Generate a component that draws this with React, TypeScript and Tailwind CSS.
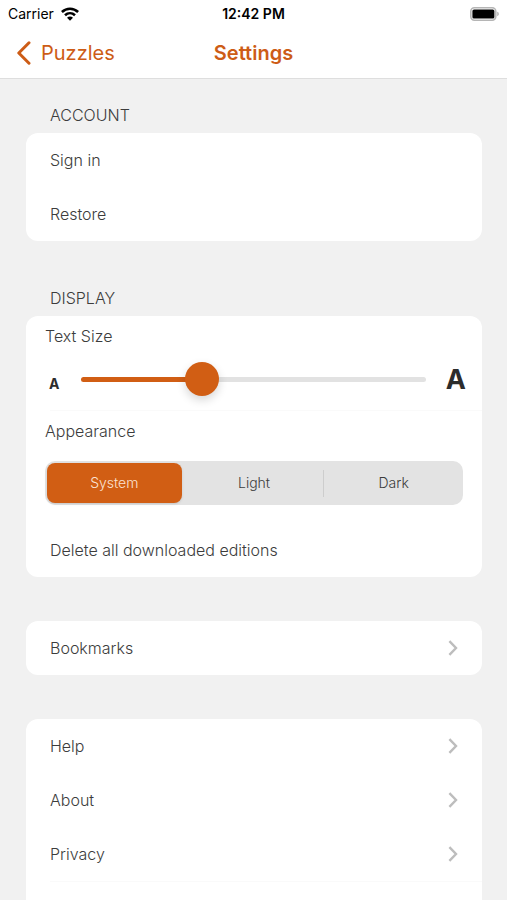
import React, { Fragment, useState } from "react";

const ACCOUNT_ITEMS = ["Sign in", "Restore"];
const INFO_ITEMS = ["Help", "About", "Privacy"];
const APPEARANCES = ["System", "Light", "Dark"];
const MAX_TEXT_SIZE = 6;

function StatusBar() {
  return (
    <div className="grid grid-cols-3 items-center h-[27px] px-2 text-black">
      <div className="flex items-center gap-[7px] text-[14px]">
        <span>Carrier</span>
        <svg width="18" height="14" viewBox="0 0 18 14" fill="none" stroke="currentColor" strokeWidth="2.6" aria-hidden="true">
          <path d="M.9 5C5.6.7 12.4.7 17.1 5" />
          <path d="M4 8.3c2.9-2.7 7.1-2.7 10 0" />
          <path d="M9 13.8 6 10.8c1.7-1.6 4.3-1.6 6 0Z" fill="currentColor" stroke="none" />
        </svg>
      </div>
      <div className="text-center text-[14px] font-semibold whitespace-nowrap">12:42 PM</div>
      <svg className="justify-self-end" width="30" height="14" viewBox="0 0 30 14" aria-hidden="true">
        <rect x="1.8" y="0.8" width="25" height="12.4" rx="3.6" fill="#fff" stroke="#b5b5b5" strokeWidth="1.6" />
        <rect x="3.4" y="2.5" width="22" height="9" rx="1.6" fill="#000" />
        <path d="M28.2 4.8c2.2.6 2.2 3.8 0 4.4Z" fill="#b5b5b5" />
      </svg>
    </div>
  );
}

function NavBar() {
  return (
    <div className="grid grid-cols-3 items-center h-[51px] px-4 text-[20px] text-[#cd5c16]">
      <a href="#puzzles" className="flex items-center gap-2">
        <svg width="17" height="24" viewBox="0 0 17 24" fill="none" stroke="currentColor" strokeWidth="3" strokeLinecap="round" strokeLinejoin="round" aria-hidden="true">
          <path d="M13 1.8 2.8 12 13 22.2" />
        </svg>
        Puzzles
      </a>
      <h1 className="text-center font-semibold">Settings</h1>
    </div>
  );
}

function Row({ label, chevron }: { label: string; chevron?: boolean }) {
  return (
    <button type="button" className="flex items-center justify-between w-full h-[54px] px-6 text-left">
      <span>{label}</span>
      {chevron && (
        <svg width="10" height="16" viewBox="0 0 10 16" fill="none" stroke="#bdbdbd" strokeWidth="2.4" aria-hidden="true">
          <path d="M1.4 1.2 8 8l-6.6 6.8" />
        </svg>
      )}
    </button>
  );
}

function TextSizeSlider() {
  const [size, setSize] = useState(2);
  const fill = (size / MAX_TEXT_SIZE) * 100;

  return (
    <div className="pl-[19px] pr-4 pt-2">
      <label htmlFor="text-size" className="block">Text Size</label>
      <div className="flex items-center h-[62px] pl-1 text-[#2c2c2c] font-bold">
        <span className="w-8 pt-[10px] text-[14px]">A</span>
        <input
          id="text-size"
          type="range"
          min={0}
          max={MAX_TEXT_SIZE}
          value={size}
          onChange={(e) => setSize(Number(e.target.value))}
          style={{ backgroundImage: `linear-gradient(to right, #d15e14 ${fill}%, #e2e2e2 ${fill}%)` }}
          className="flex-1 min-w-0 h-[5px] appearance-none rounded-full [&::-webkit-slider-thumb]:appearance-none [&::-webkit-slider-thumb]:size-[34px] [&::-webkit-slider-thumb]:rounded-full [&::-webkit-slider-thumb]:bg-[#d15e14] [&::-webkit-slider-thumb]:shadow-[0_4px_10px_rgba(0,0,0,0.16)]"
        />
        <span className="w-10 pt-[2px] text-right text-[27px]">A</span>
      </div>
    </div>
  );
}

function AppearancePicker() {
  const [selected, setSelected] = useState("System");
  const selectedIndex = APPEARANCES.indexOf(selected);

  return (
    <div role="radiogroup" aria-labelledby="appearance-label" className="px-[19px] pt-2">
      <div id="appearance-label">Appearance</div>
      <div className="flex items-center h-11 mt-[18px] rounded-[10px] bg-[#e3e3e3] text-[14px]">
        {APPEARANCES.map((name, i) => (
          <Fragment key={name}>
            {i > 0 && (
              <span className={`w-px h-[27px] ${selectedIndex === i || selectedIndex === i - 1 ? "bg-transparent" : "bg-[#cdcdcd]"}`} />
            )}
            <label className="flex flex-1 items-center justify-center h-10 mx-[2px] rounded-lg cursor-pointer has-checked:bg-[#d15e14] has-checked:text-[#fbe3d3] has-checked:shadow-sm">
              <input
                type="radio"
                name="appearance"
                className="sr-only"
                checked={selected === name}
                onChange={() => setSelected(name)}
              />
              {name}
            </label>
          </Fragment>
        ))}
      </div>
    </div>
  );
}

export default function App() {
  return (
    <div className="flex flex-col min-h-screen bg-[#f1f1f1] text-[#3c3c3c] font-[Inter,sans-serif]">
      <header className="bg-white border-b border-[#dedede]">
        <StatusBar />
        <NavBar />
      </header>

      <main className="flex flex-col flex-1 pl-[26px] pr-[25px] pt-6 text-[16px] leading-6 font-light">
        {/* Account */}
        <h2 className="pl-6 pb-[6px] font-light">ACCOUNT</h2>
        <section className="rounded-xl bg-white">
          {ACCOUNT_ITEMS.map((label) => <Row key={label} label={label} />)}
        </section>

        {/* Display */}
        <h2 className="pl-6 pt-[45px] pb-[6px] font-light">DISPLAY</h2>
        <section className="rounded-xl bg-white">
          <TextSizeSlider />
          <div className="ml-6 border-t border-[#fafafa]" />
          <AppearancePicker />
          <div className="pt-[18px]">
            <Row label="Delete all downloaded editions" />
          </div>
        </section>

        {/* Bookmarks */}
        <section className="mt-11 rounded-xl bg-white">
          <Row label="Bookmarks" chevron />
        </section>

        {/* Info */}
        <section className="flex-1 mt-11 rounded-t-xl bg-white">
          {INFO_ITEMS.map((label) => <Row key={label} label={label} chevron />)}
          <div className="ml-6 border-t border-[#fafafa]" />
        </section>
      </main>
    </div>
  );
}
